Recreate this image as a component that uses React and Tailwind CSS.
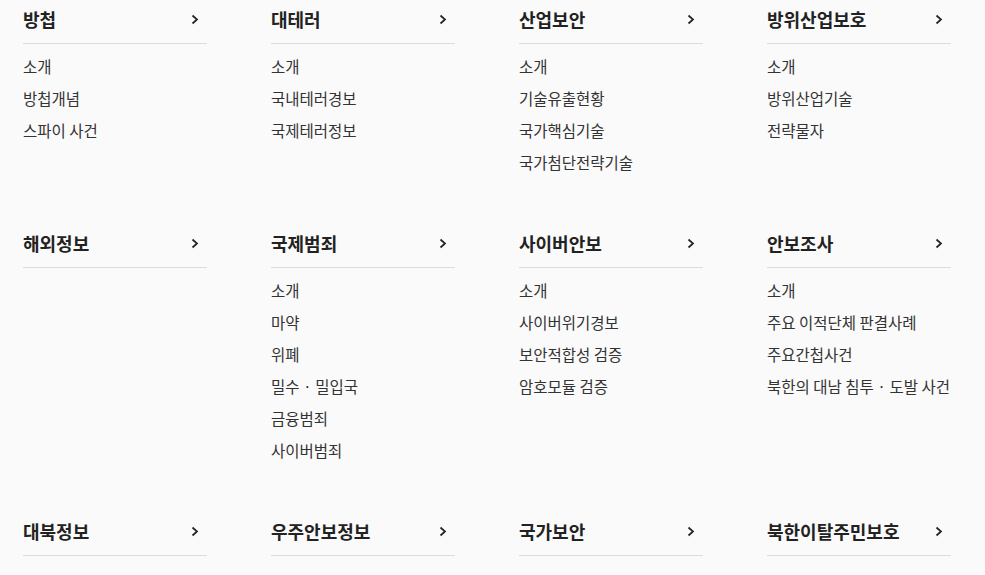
import React from 'react';

const sections = [
  { title: '방첩', items: ['소개', '방첩개념', '스파이 사건'] },
  { title: '대테러', items: ['소개', '국내테러경보', '국제테러정보'] },
  { title: '산업보안', items: ['소개', '기술유출현황', '국가핵심기술', '국가첨단전략기술'] },
  { title: '방위산업보호', items: ['소개', '방위산업기술', '전략물자'] },
  { title: '해외정보', items: [] },
  { title: '국제범죄', items: ['소개', '마약', '위폐', '밀수 · 밀입국', '금융범죄', '사이버범죄'] },
  { title: '사이버안보', items: ['소개', '사이버위기경보', '보안적합성 검증', '암호모듈 검증'] },
  { title: '안보조사', items: ['소개', '주요 이적단체 판결사례', '주요간첩사건', '북한의 대남 침투 · 도발 사건'] },
  { title: '대북정보', items: [] },
  { title: '우주안보정보', items: [] },
  { title: '국가보안', items: [] },
  { title: '북한이탈주민보호', items: [] },
];

const Chevron = () => (
  <svg width="8" height="11" viewBox="0 0 8 11" fill="none" className="mr-2">
    <path d="M1.5 1.5 L6 5.5 L1.5 9.5" stroke="#222" strokeWidth="1.7" />
  </svg>
);

export default function App() {
  return (
    <div
      className="min-h-screen bg-[#fafafa] pl-[23px] pt-[7px]"
      style={{ fontFamily: '"Noto Sans CJK KR", "Noto Sans", sans-serif' }}
    >
      <div className="grid grid-cols-[repeat(4,184px)] gap-x-16 gap-y-[53px]">
        {sections.map((s) => (
          <div key={s.title}>
            <div className="flex items-center justify-between border-b border-[#dcdcdc] pb-3">
              <span className="text-[18px] leading-6 font-bold text-[#222]">{s.title}</span>
              <Chevron />
            </div>
            {s.items.length > 0 && (
              <ul className="mt-[6px]">
                {s.items.map((it) => (
                  <li key={it} className="h-8 text-[15.5px] leading-8 text-[#333] whitespace-nowrap">
                    {it}
                  </li>
                ))}
              </ul>
            )}
          </div>
        ))}
      </div>
    </div>
  );
}
